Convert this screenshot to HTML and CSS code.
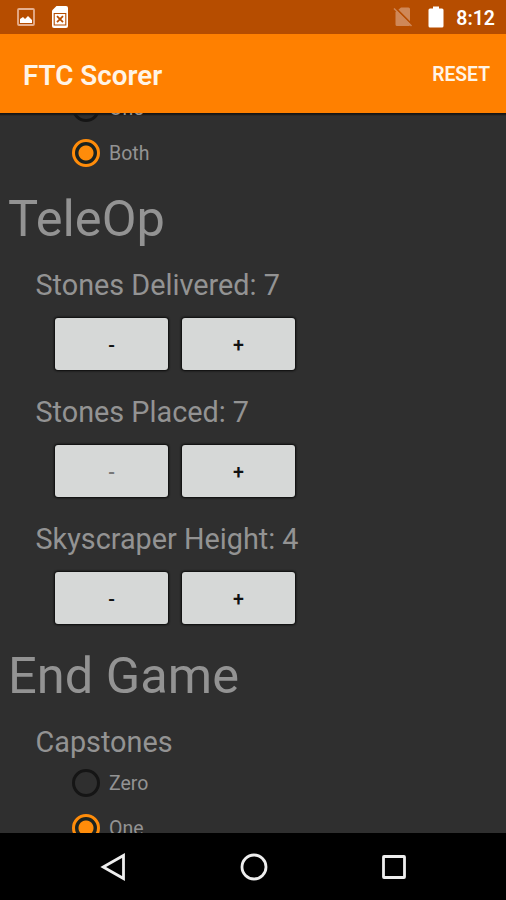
FILE: index.html
```
<!DOCTYPE html>
<html lang="en">
<head>
<meta charset="utf-8" />
<title>FTC Scorer</title>
<link rel="stylesheet" href="styles.css">
</head>
<body>

<div class="status">
	<svg class="picture" width="18" height="18" viewBox="0 0 18 18">
		<rect x="1" y="1" width="16" height="16" rx="1" fill="none" stroke="#e6b08f" stroke-width="1.8"/>
		<path d="M3 15v-4l3-2 2 2 3-3 4 4v3z" fill="#fff"/>
	</svg>
	<svg class="file" width="18" height="24" viewBox="0 0 18 24">
		<path d="M5.500 1H15q2 0 2 2v18q0 2-2 2H3q-2 0-2-2V5.500z" fill="#fff"/>
		<path d="M3.200 8.500h11.600v11.500H3.200z" fill="none" stroke="#b64d00" stroke-width="1.100"/>
		<path d="M6 11.200l6 6m0-6l-6 6" fill="none" stroke="#b64d00" stroke-width="1.800"/>
	</svg>
	<span class="space"></span>
	<svg class="nosim" width="20" height="20" viewBox="0 0 20 20">
		<path d="M8 .5h7.500q1.500 0 1.500 1.500V18q0 1-1 1H4q-1.500 0-1.500-1.500V5z" fill="#cf8858"/>
		<path d="M2.500 1l17 17" stroke="#b64d00" stroke-width="1.800"/>
		<path d="M1 1.500l17.500 17.500" stroke="#cf8858" stroke-width="1.500"/>
	</svg>
	<svg class="battery" width="16" height="22" viewBox="0 0 16 22">
		<path d="M5 .5h6v2h3q1.500 0 1.500 1.500v16q0 1.500-1.500 1.500H2Q.5 21.500.5 20V4Q.5 2.500 2 2.500h3z" fill="#fff"/>
	</svg>
	<span class="time">8:12</span>
</div>

<header class="bar">
	<h1>FTC Scorer</h1>
	<span class="reset">RESET</span>
</header>

<main class="screen">
	<div class="scroll">
		<div class="option"><span class="radio"></span><span class="name">One</span></div>
		<div class="option"><span class="radio on"></span><span class="name">Both</span></div>

		<h2>TeleOp</h2>
		<h3>Stones Delivered: 7</h3>
		<div class="buttons">
			<button type="button">-</button>
			<button type="button">+</button>
		</div>
		<h3>Stones Placed: 7</h3>
		<div class="buttons">
			<button type="button" class="faded">-</button>
			<button type="button">+</button>
		</div>
		<h3>Skyscraper Height: 4</h3>
		<div class="buttons">
			<button type="button">-</button>
			<button type="button">+</button>
		</div>

		<h2>End Game</h2>
		<h3>Capstones</h3>
		<div class="group">
			<div class="option"><span class="radio"></span><span class="name">Zero</span></div>
			<div class="option"><span class="radio on"></span><span class="name">One</span></div>
		</div>
	</div>
</main>

<nav class="nav">
	<svg width="28" height="28" viewBox="0 0 28 28"><path d="M23.500 2.500v23L3.200 14z"/></svg>
	<svg width="28" height="28" viewBox="0 0 28 28"><circle cx="14" cy="14" r="12"/></svg>
	<svg width="28" height="28" viewBox="0 0 28 28"><rect x="3.500" y="3.500" width="21" height="21" rx=".5"/></svg>
</nav>

</body>
</html>
```
FILE: styles.css
```
* {
	box-sizing: border-box;
}
body {
	margin: 0;
	height: 900px;
	display: flex;
	flex-direction: column;
	overflow: hidden;
	background: #000;
	font-family: Roboto, sans-serif;
}

/* status bar */
.status {
	height: 34px;
	flex: none;
	display: flex;
	align-items: center;
	padding: 0 11px 0 17px;
	background: #b64d00;
	color: #fff;
}
.file {
	margin-left: 16px;
}
.space {
	flex: 1;
}
.battery {
	margin: 0 12px 0 15px;
}
.time {
	font-size: 19.5px;
	font-weight: 600;
	line-height: 24px;
	padding-top: 3px;
}

/* app bar */
.bar {
	height: 79px;
	flex: none;
	display: flex;
	align-items: center;
	justify-content: space-between;
	padding: 3px 16px 0 23px;
	background: #ff8000;
	color: #fff4e6;
}
.bar h1 {
	margin: 0;
	font-size: 27.8px;
	font-weight: 600;
}
.reset {
	margin-top: -2px;
	font-size: 19.3px;
	font-weight: 600;
}

/* scrolled content */
.screen {
	height: 720px;
	flex: none;
	overflow: hidden;
	background: linear-gradient(#151515 1px, #2f2f2f 3px);
	color: #939393;
}
.scroll {
	margin-top: -28px;
}
h2 {
	margin: 14px 0 21px 8px;
	font-size: 50.6px;
	font-weight: 400;
	line-height: 59px;
}
.buttons + h2 {
	margin-top: 22px;
}
h3 {
	margin: 0 0 0 35.5px;
	font-size: 28.8px;
	font-weight: 400;
	line-height: 33px;
}
.buttons {
	display: flex;
	gap: 14px;
	margin: 16px 0 0 55px;
}
.buttons + h3 {
	margin-top: 26px;
}
button {
	width: 113px;
	height: 52px;
	padding: 2px 0 0;
	border: 0;
	border-radius: 3px;
	background: #d6d8d7;
	color: #111;
	font: 500 19.7px Roboto, sans-serif;
	box-shadow: 0 0 2px 1px #0b0b0b;
}
.faded {
	color: #777;
}
.group {
	padding-top: 1px;
}
.option {
	height: 45px;
	display: flex;
	align-items: center;
	padding-left: 72px;
	font-size: 19.5px;
	line-height: 24px;
}
.name {
	padding-top: 2px;
}
.radio {
	width: 28px;
	height: 28px;
	margin-right: 9px;
	border: 3px solid #151515;
	border-radius: 50%;
}
.radio.on {
	border: 3px solid #ff8c0a;
	background: radial-gradient(circle, #ff8c0a 7px, #1c2320 8px);
}

/* system buttons */
.nav {
	height: 67px;
	display: flex;
	align-items: center;
	justify-content: center;
	gap: 112px;
	padding-left: 2px;
}
.nav svg {
	fill: none;
	stroke: #eee;
	stroke-width: 2.8;
}
```
